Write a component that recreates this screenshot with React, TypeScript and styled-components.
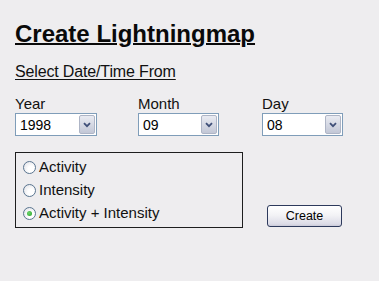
import React from 'react';
import styled, { createGlobalStyle } from 'styled-components';

const Global = createGlobalStyle`
  html, body { margin: 0; padding: 0; background: #eeedef; }
  body { font-family: "Liberation Sans", Arial, sans-serif; color: #000; }
`;

const Page = styled.div`
  width: 379px;
  height: 281px;
  box-sizing: border-box;
  padding: 20px 0 0 15px;
  background: #eeedef;
`;

const Title = styled.h1`
  margin: 0;
  font-size: 24px;
  line-height: 28px;
  font-weight: bold;
  color: #0a0a0a;
  text-decoration: underline;
  text-decoration-thickness: 2px;
  text-underline-offset: 1px;
`;

const Subheading = styled.div`
  margin-top: 15px;
  font-size: 16px;
  line-height: 18px;
  color: #111;
  text-decoration: underline;
  text-decoration-thickness: 1px;
  text-underline-offset: 2px;
  letter-spacing: -0.15px;
`;

const Fields = styled.div`
  display: grid;
  grid-template-columns: 123px 124px auto;
  margin-top: 14px;
`;

const Field = styled.div`
  display: flex;
  flex-direction: column;
`;

const Label = styled.span`
  font-size: 15px;
  line-height: 17px;
  color: #111;
`;

const SelectBox = styled.div<{ $w: number }>`
  margin-top: 1px;
  width: ${(p) => p.$w}px;
  height: 23px;
  box-sizing: border-box;
  border: 1px solid #7f9db9;
  background: #fff;
  display: flex;
  align-items: center;
  justify-content: space-between;
  padding: 1px;
`;

const SelectValue = styled.span`
  font-size: 14px;
  line-height: 19px;
  padding: 1px 0 0 3px;
`;

const DropButton = styled.span`
  width: 16px;
  height: 19px;
  box-sizing: border-box;
  border: 1px solid #aeb5c6;
  border-radius: 2px;
  background: linear-gradient(#e9ebf2, #c2c7d6);
  display: flex;
  align-items: center;
  justify-content: center;
`;

const OptionsRow = styled.div`
  display: flex;
  align-items: flex-end;
  margin-top: 16px;
`;

const OptionBox = styled.div`
  width: 228px;
  box-sizing: border-box;
  border: 1px solid #1e1e1e;
  padding: 2px 0 3px 7px;
`;

const OptionRow = styled.label`
  display: flex;
  align-items: center;
  height: 23px;
  font-size: 15px;
  color: #111;
  gap: 3px;
`;

const Radio = styled.span<{ $checked?: boolean }>`
  width: 13px;
  height: 13px;
  box-sizing: border-box;
  border-radius: 50%;
  border: 1px solid #5a7590;
  background: radial-gradient(circle at 65% 65%, #ffffff 30%, #dcdde3 100%);
  display: flex;
  align-items: center;
  justify-content: center;
  margin-top: 1px;
  &::after {
    content: '';
    display: ${(p) => (p.$checked ? 'block' : 'none')};
    width: 5px;
    height: 5px;
    border-radius: 50%;
    background: radial-gradient(circle at 40% 40%, #6fd46f, #21a121);
  }
`;

const CreateButton = styled.button`
  margin: 0 0 1px 24px;
  width: 75px;
  height: 22px;
  box-sizing: border-box;
  border: 1px solid #2d3a5c;
  border-radius: 3px;
  background: linear-gradient(#ffffff 0%, #f3f3f6 45%, #dcdce7 90%, #c9c9d8 100%);
  font-family: "Liberation Sans", Arial, sans-serif;
  font-size: 12.5px;
  color: #000;
  padding: 0;
`;

function Chevron() {
  return (
    <svg width="8" height="6" viewBox="0 0 8 6">
      <path d="M1 1.2 L4 4.2 L7 1.2" fill="none" stroke="#3f4f78" strokeWidth="1.8" />
    </svg>
  );
}

function Select({ value, w }: { value: string; w: number }) {
  return (
    <SelectBox $w={w}>
      <SelectValue>{value}</SelectValue>
      <DropButton>
        <Chevron />
      </DropButton>
    </SelectBox>
  );
}

export default function App() {
  return (
    <>
      <Global />
      <Page>
        <Title>Create Lightningmap</Title>
        <Subheading>Select Date/Time From</Subheading>
        <Fields>
          <Field>
            <Label>Year</Label>
            <Select value="1998" w={82} />
          </Field>
          <Field>
            <Label>Month</Label>
            <Select value="09" w={81} />
          </Field>
          <Field>
            <Label>Day</Label>
            <Select value="08" w={81} />
          </Field>
        </Fields>
        <OptionsRow>
          <OptionBox>
            <OptionRow>
              <Radio />
              Activity
            </OptionRow>
            <OptionRow>
              <Radio />
              Intensity
            </OptionRow>
            <OptionRow>
              <Radio $checked />
              Activity + Intensity
            </OptionRow>
          </OptionBox>
          <CreateButton>Create</CreateButton>
        </OptionsRow>
      </Page>
    </>
  );
}
